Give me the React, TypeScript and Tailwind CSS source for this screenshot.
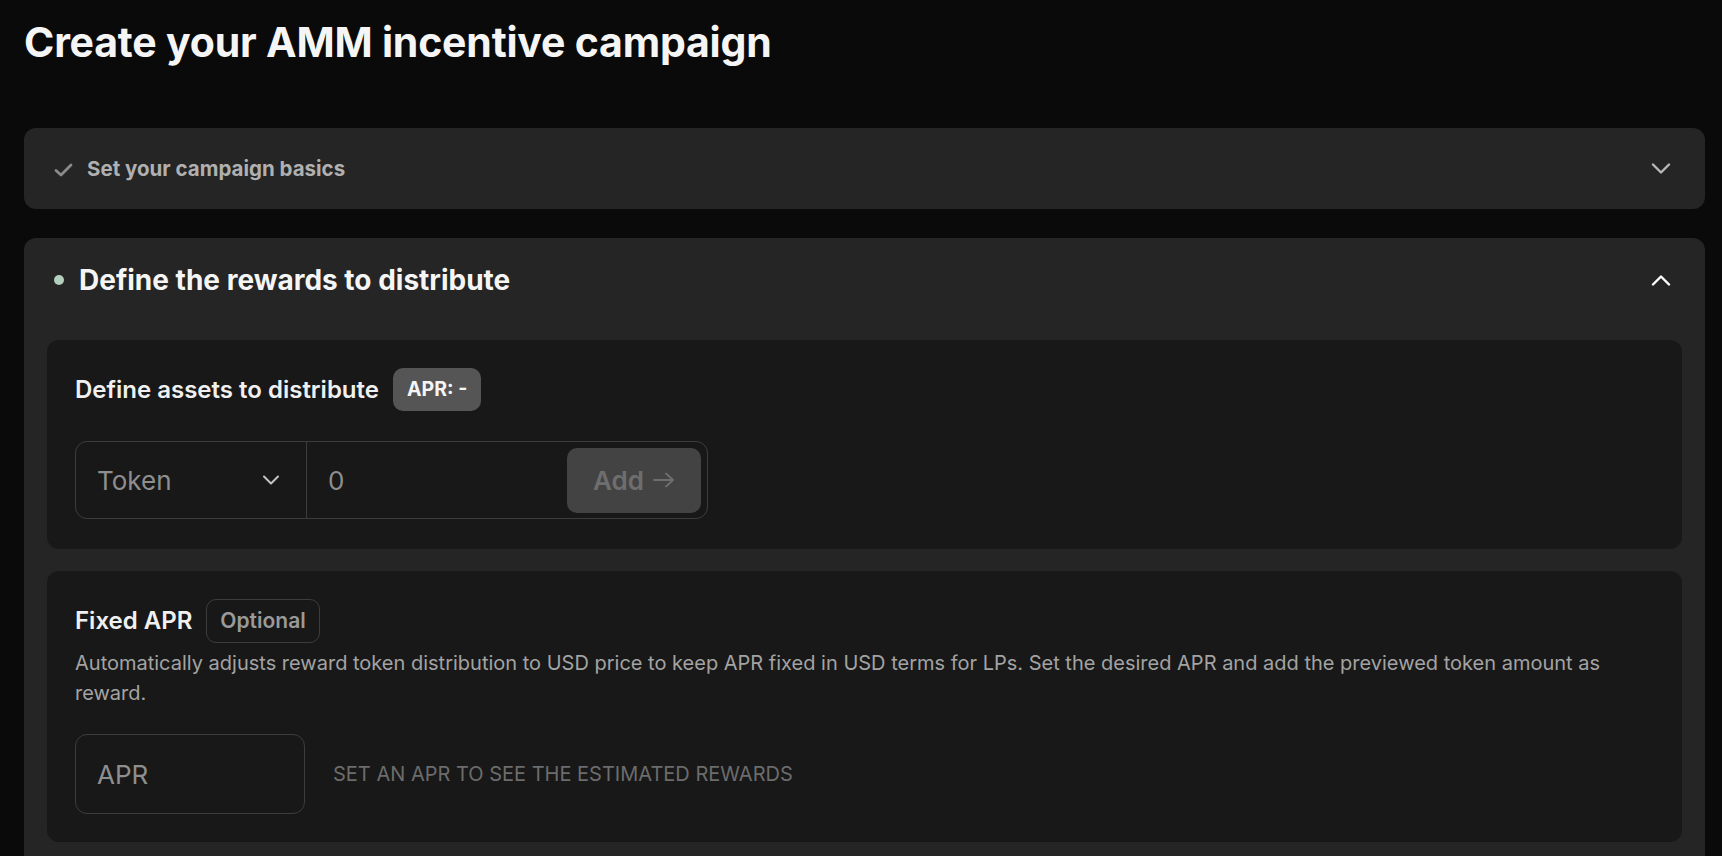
import React from "react";

const ChevronIcon: React.FC<{ up?: boolean; className?: string }> = ({
  up,
  className,
}) => (
  <svg
    width="20"
    height="12"
    viewBox="0 0 20 12"
    fill="none"
    className={className}
  >
    <polyline
      points={up ? "2,10.5 10,2.5 18,10.5" : "2,1.5 10,9.5 18,1.5"}
      stroke="currentColor"
      strokeWidth="2.4"
      strokeLinecap="round"
      strokeLinejoin="round"
    />
  </svg>
);

const CheckIcon: React.FC = () => (
  <svg width="19" height="14" viewBox="0 0 19 14" fill="none">
    <polyline
      points="2,7.5 7,12 17,2"
      stroke="currentColor"
      strokeWidth="2.8"
      strokeLinecap="round"
      strokeLinejoin="round"
    />
  </svg>
);

const App: React.FC = () => {
  return (
    <div
      className="min-h-screen bg-[#0a0a0a] pl-6 pr-[17px] pt-[18px] pb-10 text-white"
      style={{ fontFamily: "Inter, 'Noto Sans', sans-serif" }}
    >
      <h1 className="text-[41px] leading-[48px] font-bold tracking-[-0.2px] text-[#f5f5f5]">
        Create your AMM incentive campaign
      </h1>

      {/* step 1, collapsed */}
      <div className="mt-[62px] h-[81px] rounded-xl bg-[#252525] pl-[30px] pr-[34px] flex items-center justify-between">
        <div className="flex items-center gap-[14px] pt-[2px] text-[#b0b0b0]">
          <span className="text-[#8a8a8a]">
            <CheckIcon />
          </span>
          <span className="text-[20.5px] font-bold">Set your campaign basics</span>
        </div>
        <ChevronIcon className="text-[#b8b8b8]" />
      </div>

      {/* step 2, open */}
      <div className="mt-[29px] rounded-xl bg-[#252525] px-[23px] pb-6">
        <div className="flex items-center justify-between pl-[7px] pr-[11px] pt-6 pb-[42px]">
          <div className="flex items-center gap-[15px]">
            <span className="w-[10px] h-[10px] rounded-full bg-[#b3cfbd]" />
            <span className="text-[28px] leading-9 font-bold text-[#f5f5f5]">
              Define the rewards to distribute
            </span>
          </div>
          <ChevronIcon up className="text-white" />
        </div>

        <div className="flex flex-col gap-[22px]">
          {/* assets */}
          <div className="rounded-xl bg-[#181818] px-7 pt-7 pb-[30px]">
            <div className="flex items-center gap-[14px] h-[43px]">
              <span className="text-[24px] font-semibold text-[#f0f0f0]">
                Define assets to distribute
              </span>
              <span className="h-[43px] px-[14px] rounded-[10px] bg-[#555555] flex items-center text-[19.5px] font-bold text-[#f5f5f5]">
                APR: -
              </span>
            </div>
            <div className="mt-[30px] w-[633px] h-[78px] rounded-xl border border-[#3d3d3d] flex items-stretch">
              <div className="w-[231px] border-r border-[#3d3d3d] flex items-center justify-between pl-[21px] pr-[26px]">
                <span className="text-[26px] text-[#8e8e8e]">Token</span>
                <svg width="18" height="10" viewBox="0 0 18 10" fill="none" className="text-[#c4c4c4]">
                  <polyline
                    points="2,1.5 9,8.5 16,1.5"
                    stroke="currentColor"
                    strokeWidth="2"
                    strokeLinecap="round"
                    strokeLinejoin="round"
                  />
                </svg>
              </div>
              <div className="flex-1 flex items-center justify-between pl-[21px] pr-[6px]">
                <span className="text-[26px] text-[#8e8e8e]">0</span>
                <button className="w-[134px] h-[65px] rounded-[10px] bg-[#434343] flex items-center justify-center gap-[9px] text-[#6e6e6e]">
                  <span className="text-[26px] font-semibold">Add</span>
                  <svg width="22" height="16" viewBox="0 0 22 16" fill="none">
                    <path
                      d="M1 8h19M13 1.5 20 8l-7 6.5"
                      stroke="currentColor"
                      strokeWidth="1.8"
                      strokeLinecap="round"
                      strokeLinejoin="round"
                    />
                  </svg>
                </button>
              </div>
            </div>
          </div>

          {/* fixed apr */}
          <div className="rounded-xl bg-[#181818] p-7">
            <div className="flex items-center gap-[14px] h-11">
              <span className="text-[24px] font-semibold text-[#f0f0f0]">
                Fixed APR
              </span>
              <span className="h-11 px-[13px] rounded-[10px] border border-[#3d3d3d] flex items-center text-[21px] font-semibold text-[#9a9a9a]">
                Optional
              </span>
            </div>
            <p className="mt-[5px] text-[20px] leading-[30px] text-[#a3a3a3]">
              Automatically adjusts reward token distribution to USD price to keep APR fixed in USD terms for LPs. Set the desired APR and add the previewed token amount as reward.
            </p>
            <div className="mt-[26px] flex items-center gap-[28px]">
              <div className="w-[230px] h-[80px] rounded-xl border border-[#3d3d3d] flex items-center pl-[21px]">
                <span className="text-[26px] text-[#8e8e8e]">APR</span>
              </div>
              <span className="text-[20px] uppercase text-[#6c6c6c]">
                Set an APR to see the estimated rewards
              </span>
            </div>
          </div>
        </div>
      </div>
    </div>
  );
};

export default App;
